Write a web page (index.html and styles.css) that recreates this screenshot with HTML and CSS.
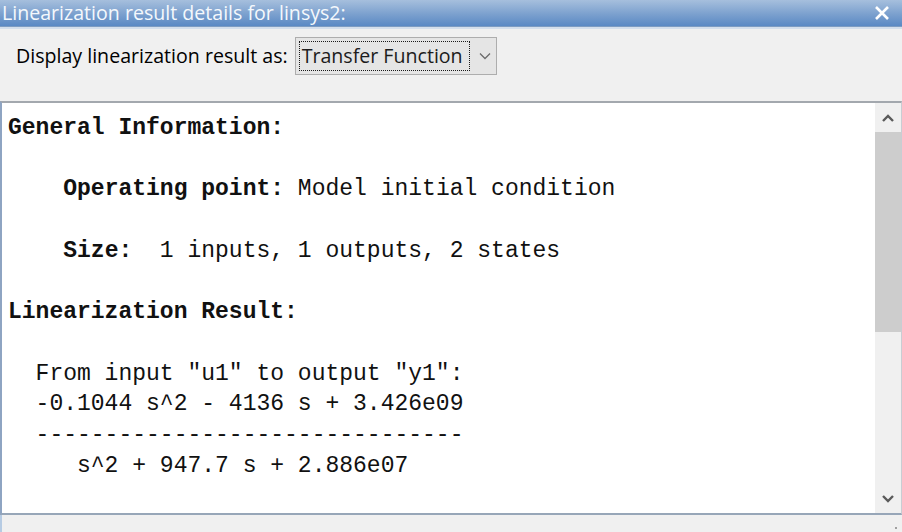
FILE: index.html
```html
<!DOCTYPE html>
<html>
<head>
<meta charset="utf-8">
<link rel="stylesheet" href="styles.css">
</head>
<body>
<div class="window">
  <div class="titlebar">
    <span class="title">Linearization result details for linsys2:</span>
    <svg class="close" width="16" height="16" viewBox="0 0 16 16"><path d="M2 2 L14 14 M14 2 L2 14" stroke="#ffffff" stroke-width="2.6" fill="none"/></svg>
  </div>
  <div class="titlesep"></div>
  <div class="toolbar">
    <span class="label">Display linearization result as:</span>
    <div class="combo">
      <span class="combo-text">Transfer Function</span>
      <svg class="combo-arrow" width="14" height="10" viewBox="0 0 14 10"><path d="M2 2.5 L7 7.5 L12 2.5" stroke="#6b6b6b" stroke-width="1.3" fill="none"/></svg>
    </div>
  </div>
  <div class="output">
    <pre class="text"><b>General Information:</b>

    <b>Operating point:</b> Model initial condition

    <b>Size:</b>  1 inputs, 1 outputs, 2 states

<b>Linearization Result:</b>

  From input "u1" to output "y1":
  -0.1044 s^2 - 4136 s + 3.426e09
  -------------------------------
     s^2 + 947.7 s + 2.886e07
</pre>
    <div class="scrollbar">
      <div class="sb-btn"><svg width="14" height="10" viewBox="0 0 14 10"><path d="M2 8 L7 3 L12 8" stroke="#5a5a5a" stroke-width="2.4" fill="none"/></svg></div>
      <div class="sb-thumb"></div>
      <div class="sb-track"></div>
      <div class="sb-btn"><svg width="14" height="10" viewBox="0 0 14 10"><path d="M2 2 L7 7 L12 2" stroke="#5a5a5a" stroke-width="2.4" fill="none"/></svg></div>
    </div>
  </div>
  <div class="status"><span class="grip"></span></div>
</div>
</body>
</html>
```
FILE: styles.css
```css
html, body {
  margin: 0;
  padding: 0;
  background: #f0f0f0;
}
.window {
  width: 902px;
  height: 532px;
  display: flex;
  flex-direction: column;
  background: #f0f0f0;
  overflow: hidden;
}
.titlebar {
  height: 26px;
  flex: none;
  display: flex;
  align-items: center;
  justify-content: space-between;
  padding: 0 12px 0 2px;
  background: linear-gradient(#a6bfdd, #7ba0ce 55%, #5a89c4);
  border-bottom: 1px solid #7d9cc2;
}
.title {
  font-family: "Open Sans", "Noto Sans", sans-serif;
  font-size: 19.6px;
  color: #f4f8fc;
  line-height: 26px;
}
.close {
  display: block;
}
.titlesep {
  height: 2px;
  flex: none;
  background: #d4dfec;
}
.toolbar {
  height: 72px;
  flex: none;
  display: flex;
  align-items: flex-start;
  padding: 8px 0 0 16px;
  box-sizing: border-box;
  gap: 7px;
  font-family: "Open Sans", "Noto Sans", sans-serif;
  font-size: 19.6px;
  color: #000;
}
.label {
  line-height: 38px;
}
.combo {
  width: 202px;
  height: 38px;
  box-sizing: border-box;
  border: 1px solid #adadad;
  background: #e5e5e5;
  display: flex;
  align-items: center;
  padding: 3px 0 3px 3px;
}
.combo-text {
  width: 171px;
  height: 30px;
  box-sizing: border-box;
  border: 1px dotted #1a1a1a;
  line-height: 28px;
  padding-left: 2px;
  color: #1c1c1c;
  white-space: nowrap;
}
.combo-arrow {
  margin-left: 8px;
}
.output {
  flex: 1;
  display: flex;
  background: #fff;
  border-top: 2px solid #a3a8ae;
  border-left: 2px solid #8ea4c2;
  border-right: 1px solid #c8cdd3;
  border-bottom: 2px solid #97a6b8;
  min-height: 0;
}
.text {
  flex: 1;
  margin: 0;
  padding: 10px 0 0 6px;
  font-family: "Liberation Mono", "Courier New", monospace;
  font-size: 23px;
  line-height: 30.7px;
  color: #111;
  overflow: hidden;
}
.text b {
  font-weight: bold;
}
.scrollbar {
  width: 26px;
  flex: none;
  display: flex;
  flex-direction: column;
  background: #f0f0f0;
}
.sb-btn {
  height: 29px;
  flex: none;
  display: flex;
  align-items: center;
  justify-content: center;
}
.sb-thumb {
  height: 200px;
  flex: none;
  background: #cdcdcd;
}
.sb-track {
  flex: 1;
}
.status {
  height: 17px;
  flex: none;
  position: relative;
  background: #f0f0f0;
  border-left: 2px solid #b6cbe3;
}
.grip {
  position: absolute;
  right: 5px;
  bottom: 3px;
  width: 2px;
  height: 2px;
  background: #a0a0a0;
}
```
